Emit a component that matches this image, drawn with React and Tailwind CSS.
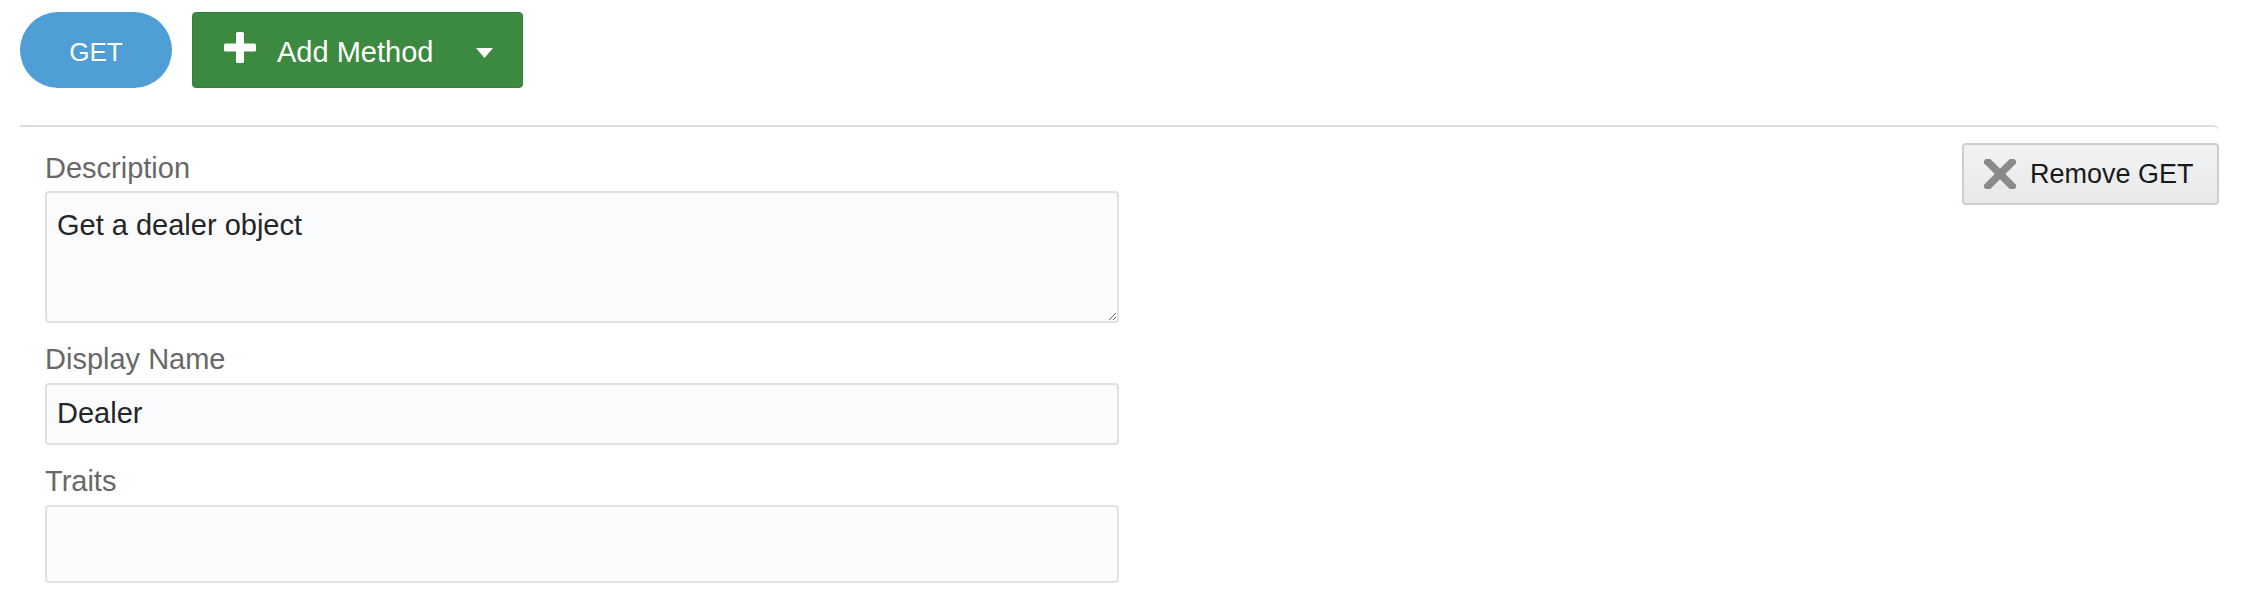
import React from "react";

function PlusIcon() {
  return (
    <svg width="32" height="31" viewBox="0 0 32 31" className="shrink-0 mb-[5px]">
      <rect x="0" y="11.5" width="32" height="8" rx="1.5" fill="#ffffff" />
      <rect x="12" y="0" width="8" height="31" rx="1.5" fill="#ffffff" />
    </svg>
  );
}

function Caret() {
  return (
    <svg width="17" height="10" viewBox="0 0 17 10" className="shrink-0">
      <polygon points="0,0 17,0 8.5,10" fill="#ffffff" />
    </svg>
  );
}

function XIcon() {
  return (
    <svg width="32" height="30" viewBox="0 0 32 30" className="shrink-0">
      <line x1="4" y1="3" x2="28" y2="27" stroke="#8a8a8a" strokeWidth="7.5" strokeLinecap="square" />
      <line x1="28" y1="3" x2="4" y2="27" stroke="#8a8a8a" strokeWidth="7.5" strokeLinecap="square" />
    </svg>
  );
}

export default function App() {
  const font = { fontFamily: '"Liberation Sans", Arial, Helvetica, sans-serif' };
  return (
    <div className="w-[2248px] h-[606px] bg-white pl-[20px] pr-[29px] pt-[12px]" style={font}>
      <div className="flex items-center gap-[20px]">
        <button className="w-[152px] h-[76px] rounded-full bg-[#4f9fd6] text-white text-[26px] flex items-center justify-center pt-[5px]">
          GET
        </button>
        <button className="w-[331px] h-[76px] rounded-[4px] bg-[#3c8a3f] border border-[#367d39] text-white text-[29px] flex items-center pl-[31px]">
          <PlusIcon />
          <span className="ml-[21px] mt-[5px]">Add Method</span>
          <span className="ml-[43px] mt-[5px] flex items-center">
            <Caret />
          </span>
        </button>
      </div>
      <div className="mt-[37px] border-t-2 border-[#dadee4] rounded-tr-[6px] flex justify-between">
        <div className="pl-[25px] w-[1099px]">
          <label className="block mt-[25px] text-[29px] leading-[33px] text-[#686868]">Description</label>
          <textarea
            defaultValue="Get a dealer object"
            className="block mt-[6px] w-[1074px] h-[132px] bg-[#fafbfd] border-2 border-[#dfe1e5] rounded-[4px] px-[10px] pt-[11px] text-[29px] leading-[1.5] text-[#262626] outline-none"
            style={font}
          />
          <label className="block mt-[20px] text-[29px] leading-[33px] text-[#686868]">Display Name</label>
          <div className="mt-[7px] w-[1074px] h-[62px] bg-[#fafbfd] border-2 border-[#dfe1e5] rounded-[4px] px-[10px] flex items-center text-[29px] text-[#262626]">
            Dealer
          </div>
          <label className="block mt-[20px] text-[29px] leading-[33px] text-[#686868]">Traits</label>
          <div className="mt-[7px] w-[1074px] h-[78px] bg-[#fafbfd] border-2 border-[#dfe1e5] rounded-[4px]"></div>
        </div>
        <div className="pt-[16px]">
          <button className="w-[257px] h-[62px] rounded-[4px] border-2 border-[#c9ced3] bg-gradient-to-b from-[#f1f2f4] to-[#e7e9eb] flex items-center pl-[20px] text-[27px] text-[#1a1a1a]">
            <XIcon />
            <span className="ml-[14px]">Remove GET</span>
          </button>
        </div>
      </div>
    </div>
  );
}
